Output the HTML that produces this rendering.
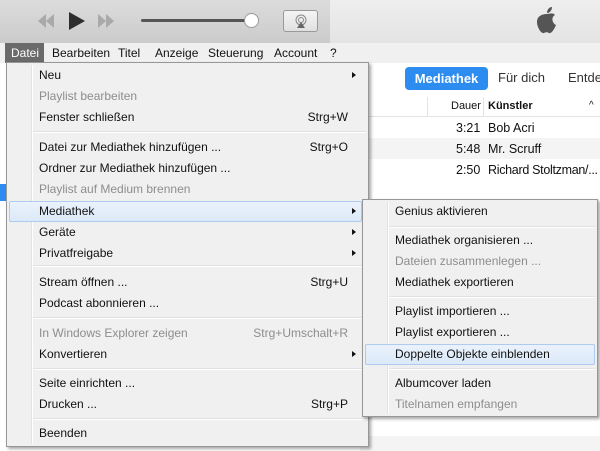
<!DOCTYPE html>
<html><head><meta charset="utf-8"><style>
*{margin:0;padding:0;box-sizing:border-box}
body{width:600px;height:451px;overflow:hidden;background:#fff;font-family:"Liberation Sans",sans-serif;font-size:12px;color:#111;position:relative}
.a{position:absolute;white-space:nowrap}
.menu{position:absolute;background:#f0f0f0;border:1px solid #979797;box-shadow:2px 2px 3px rgba(0,0,0,.35)}
.menu .gut{position:absolute;left:24px;top:2px;bottom:2px;border-left:1px solid #e2e2e2;border-right:1px solid #fff}
.it{position:absolute;height:21px;line-height:21px;left:32px;right:0}
.dis{color:#8d8d8d}
.sc{position:absolute;right:20px;top:0}
.ar{position:absolute;right:12px;top:7px;width:0;height:0;border-left:4px solid #111;border-top:3.5px solid transparent;border-bottom:3.5px solid transparent}
.sep{position:absolute;left:26px;right:2px;height:2px;border-top:1px solid #e0e0e0;border-bottom:1px solid #fff}
.hl{position:absolute;background:linear-gradient(#eaf2fc,#dce9f8);border:1px solid #aecbef;border-radius:2px}
</style></head><body>
<div class="a" style="left:0;top:0;width:330px;height:43px;background:linear-gradient(#dcdcdc,#cbcbcb)"></div>
<div class="a" style="left:330px;top:0;width:270px;height:43px;background:linear-gradient(#eeeeee,#e4e4e4)"></div>
<svg class="a" style="left:30px;top:10px" width="110" height="22">
<path d="M16 4 L8 11 L16 18Z M24 4 L16 11 L24 18Z" fill="#a9a9a9"/>
<path d="M39 2 L55 11 L39 20Z" fill="#2e2e2e"/>
<path d="M68 4 L76 11 L68 18Z M76 4 L84 11 L76 18Z" fill="#a9a9a9"/>
</svg>
<div class="a" style="left:141px;top:19px;width:112px;height:3px;background:#555;border-radius:2px"></div>
<div class="a" style="left:244px;top:13px;width:15px;height:15px;border-radius:50%;background:#fff;border:1px solid #999"></div>
<div class="a" style="left:283px;top:10px;width:35px;height:22px;border:1px solid #999;border-radius:3px;background:linear-gradient(#f5f5f5,#e0e0e0)"></div>
<svg class="a" style="left:293px;top:13px" width="16" height="16"><circle cx="8" cy="7" r="5" fill="none" stroke="#888" stroke-width="1"/><circle cx="8" cy="7" r="2.5" fill="none" stroke="#888"/><path d="M4 15 L8 9 L12 15Z" fill="#666"/></svg>
<svg class="a" style="left:534px;top:6px" width="26" height="30"><path d="M13 8 C15 8 19 6 21 9 C17 11 18 17 22 19 C20 24 17 28 15 27 C13 26 12 26 10 27 C7 28 3 21 3 16 C3 9 10 8 13 8Z M13 7 C13 4 15 1 18 1 C18 4 16 7 13 7Z" fill="#555"/></svg>
<div class="a" style="left:0;top:43px;width:600px;height:20px;background:#f0f0f0"></div>
<div class="a" style="left:5px;top:43px;width:39px;height:20px;background:#6a6a6a"></div>
<div class="a" style="left:11px;top:46px;color:#fff">Datei</div>
<div class="a" style="left:52px;top:46px">Bearbeiten</div>
<div class="a" style="left:118px;top:46px">Titel</div>
<div class="a" style="left:155px;top:46px">Anzeige</div>
<div class="a" style="left:208px;top:46px">Steuerung</div>
<div class="a" style="left:274px;top:46px">Account</div>
<div class="a" style="left:330px;top:46px">?</div>
<div class="a" style="left:405px;top:67px;width:83px;height:23px;background:#2d8cf0;border-radius:4px;color:#fff;font-size:13px;font-weight:bold;line-height:23px;text-align:center">Mediathek</div>
<div class="a" style="left:498px;top:70px;font-size:13px;color:#333">Für dich</div>
<div class="a" style="left:568px;top:70px;font-size:13px;color:#333">Entde</div>
<div class="a" style="left:360px;top:96px;width:240px;height:21px;border-bottom:1px solid #e4e4e4"></div>
<div class="a" style="left:427px;top:97px;height:20px;border-left:1px solid #e4e4e4"></div>
<div class="a" style="left:483px;top:97px;height:20px;border-left:1px solid #e4e4e4"></div>
<div class="a" style="left:451px;top:100px;font-size:11px">Dauer</div>
<div class="a" style="left:488px;top:100px;font-size:11px;font-weight:bold">Künstler</div>
<div class="a" style="left:589px;top:100px;font-size:10px">^</div>
<div class="a" style="left:360px;top:138px;width:240px;height:21px;background:#f4f4f4"></div>
<div class="a" style="left:456px;top:121px;font-size:12.5px">3:21</div><div class="a" style="left:488px;top:121px;font-size:12.5px">Bob Acri</div>
<div class="a" style="left:456px;top:142px;font-size:12.5px">5:48</div><div class="a" style="left:488px;top:142px;font-size:12.5px">Mr. Scruff</div>
<div class="a" style="left:456px;top:163px;font-size:12.5px">2:50</div><div class="a" style="left:488px;top:163px;font-size:12.5px;letter-spacing:-0.3px">Richard Stoltzman/...</div>
<div class="a" style="left:0;top:184px;width:6px;height:17px;background:#2d8cf0"></div>
<div class="a" style="left:360px;top:436px;width:240px;height:15px;background:#f4f4f4"></div>
<div class="menu" style="left:6px;top:62px;width:363px;height:385px">
<div class="gut"></div>
<div class="hl" style="left:2px;top:138px;width:353px;height:21px"></div>
<div class="it" style="top:2px">Neu<span class="ar"></span></div>
<div class="it dis" style="top:23px">Playlist bearbeiten</div>
<div class="it" style="top:44px">Fenster schließen<span class="sc">Strg+W</span></div>
<div class="sep" style="top:68px"></div>
<div class="it" style="top:74px">Datei zur Mediathek hinzufügen ...<span class="sc">Strg+O</span></div>
<div class="it" style="top:95px">Ordner zur Mediathek hinzufügen ...</div>
<div class="it dis" style="top:116px">Playlist auf Medium brennen</div>
<div class="it" style="top:138px">Mediathek<span class="ar"></span></div>
<div class="it" style="top:159px">Geräte<span class="ar"></span></div>
<div class="it" style="top:180px">Privatfreigabe<span class="ar"></span></div>
<div class="sep" style="top:202px"></div>
<div class="it" style="top:209px">Stream öffnen ...<span class="sc">Strg+U</span></div>
<div class="it" style="top:230px">Podcast abonnieren ...</div>
<div class="sep" style="top:254px"></div>
<div class="it dis" style="top:260px">In Windows Explorer zeigen<span class="sc">Strg+Umschalt+R</span></div>
<div class="it" style="top:281px">Konvertieren<span class="ar"></span></div>
<div class="sep" style="top:305px"></div>
<div class="it" style="top:310px">Seite einrichten ...</div>
<div class="it" style="top:331px">Drucken ...<span class="sc">Strg+P</span></div>
<div class="sep" style="top:355px"></div>
<div class="it" style="top:360px">Beenden</div>
</div>
<div class="menu" style="left:362px;top:199px;width:236px;height:218px">
<div class="gut"></div>
<div class="hl" style="left:2px;top:144px;width:230px;height:21px"></div>
<div class="it" style="top:1px">Genius aktivieren</div>
<div class="sep" style="top:26px"></div>
<div class="it" style="top:30px">Mediathek organisieren ...</div>
<div class="it dis" style="top:51px">Dateien zusammenlegen ...</div>
<div class="it" style="top:72px">Mediathek exportieren</div>
<div class="sep" style="top:96px"></div>
<div class="it" style="top:101px">Playlist importieren ...</div>
<div class="it" style="top:122px">Playlist exportieren ...</div>
<div class="it" style="top:144px">Doppelte Objekte einblenden</div>
<div class="sep" style="top:168px"></div>
<div class="it" style="top:173px">Albumcover laden</div>
<div class="it dis" style="top:194px">Titelnamen empfangen</div>
</div>
</body></html>
